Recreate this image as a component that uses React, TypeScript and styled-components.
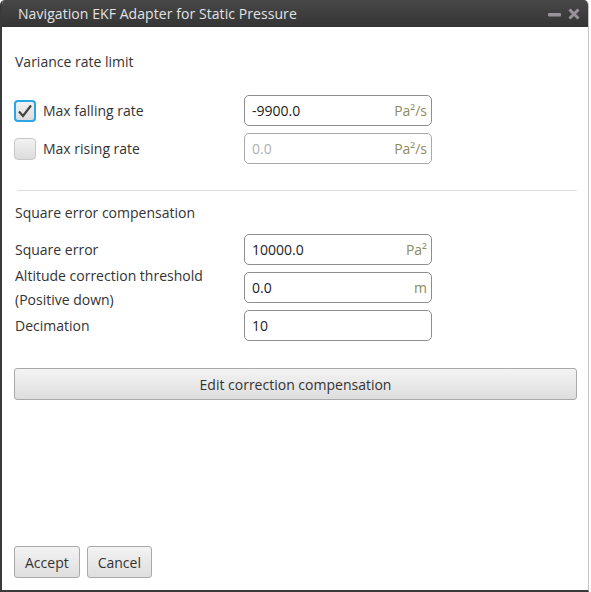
import React from "react";
import styled, { createGlobalStyle } from "styled-components";

const GlobalStyle = createGlobalStyle`
  html, body {
    margin: 0;
    padding: 0;
    background: #ffffff;
  }
  body {
    font-family: "Open Sans", "Noto Sans", "Liberation Sans", sans-serif;
    font-size: 14px;
    color: #333333;
  }
`;

const Window = styled.div`
  width: 589px;
  height: 592px;
  box-sizing: border-box;
  display: flex;
  flex-direction: column;
  background: #ffffff;
  border-left: 2px solid #3a3a3a;
  border-right: 1px solid #c4c4c4;
  border-bottom: 2px solid #3a3a3a;
  border-radius: 5px 5px 0 0;
  overflow: hidden;
`;

const TitleBar = styled.div`
  height: 27px;
  flex: none;
  display: flex;
  align-items: center;
  padding: 0 8px 0 16px;
  background: linear-gradient(#474747, #353535);
  color: #e2e2e2;
  font-size: 14px;
`;

const Title = styled.span`
  flex: 1;
  letter-spacing: 0.07px;
`;

const TitleButtons = styled.div`
  display: flex;
  align-items: center;
  gap: 7px;
`;

const Body = styled.div`
  flex: 1;
  display: flex;
  flex-direction: column;
  padding: 25px 11px 12px 13px;
`;

const SectionTitle = styled.div`
  line-height: 20px;
`;

const FormGrid = styled.div<{ $top: number }>`
  display: grid;
  grid-template-columns: 229px 188px;
  row-gap: 7px;
  margin-top: ${(p) => p.$top}px;
  align-items: center;
`;

const CheckLabel = styled.label`
  display: flex;
  align-items: center;
  gap: 7px;
  margin-left: -1px;
`;

const Box = styled.span<{ $checked?: boolean }>`
  width: 22px;
  height: 22px;
  box-sizing: border-box;
  border-radius: 4px;
  border: ${(p) => (p.$checked ? "2px solid #2aa6e6" : "1px solid #c8c8c8")};
  background: linear-gradient(#f2f2f2, #dcdcdc);
  display: flex;
  align-items: center;
  justify-content: center;
`;

const Label = styled.div`
  line-height: 24px;
`;

const TwoLineLabel = styled.div`
  line-height: 24px;
  margin-top: -8px;
  margin-bottom: -9px;
`;

const Field = styled.div<{ $disabled?: boolean }>`
  height: 31px;
  box-sizing: border-box;
  border: 1px solid ${(p) => (p.$disabled ? "#a8a8a8" : "#8e8e8e")};
  border-radius: 5px;
  background: #fff;
  display: flex;
  align-items: center;
  padding: 0 4px 0 7px;
  color: ${(p) => (p.$disabled ? "#b0b0b0" : "#222")};
`;

const Value = styled.span`
  flex: 1;
`;

const Unit = styled.span`
  color: #8d8a5c;
`;

const Divider = styled.div`
  height: 1px;
  background: #dedede;
  margin: 26px 0 12px 2px;
`;

const Button = styled.button`
  height: 32px;
  box-sizing: border-box;
  border: 1px solid #a9a9a9;
  border-radius: 3px;
  background: linear-gradient(#f3f3f3, #dedede);
  font-family: inherit;
  font-size: 14px;
  color: #333;
  padding: 0 10px;
`;

const WideButton = styled(Button)`
  margin-top: 27px;
  margin-left: -1px;
  width: 563px;
`;

const Footer = styled.div`
  margin-top: auto;
  display: flex;
  gap: 7px;
  margin-left: -1px;
`;

function Check({ checked }: { checked?: boolean }) {
  return (
    <Box $checked={checked}>
      {checked && (
        <svg width="16" height="14" viewBox="0 0 16 14">
          <path d="M2 7.5 L6 12 L14 1.5" fill="none" stroke="#444" strokeWidth="2.2" />
        </svg>
      )}
    </Box>
  );
}

function Minimize() {
  return (
    <svg width="13" height="12" viewBox="0 0 13 12">
      <rect x="0" y="5" width="13" height="3.5" rx="1" fill="#9a929a" />
    </svg>
  );
}

function Close() {
  return (
    <svg width="12" height="12" viewBox="0 0 12 12">
      <path d="M1.5 1.5 L10.5 10.5 M10.5 1.5 L1.5 10.5" stroke="#9a929a" strokeWidth="3" />
    </svg>
  );
}

export default function App() {
  return (
    <>
      <GlobalStyle />
      <Window>
        <TitleBar>
          <Title>Navigation EKF Adapter for Static Pressure</Title>
          <TitleButtons>
            <Minimize />
            <Close />
          </TitleButtons>
        </TitleBar>
        <Body>
          <SectionTitle>Variance rate limit</SectionTitle>
          <FormGrid $top={23}>
            <CheckLabel>
              <Check checked />
              Max falling rate
            </CheckLabel>
            <Field>
              <Value>-9900.0</Value>
              <Unit>Pa²/s</Unit>
            </Field>
            <CheckLabel>
              <Check />
              Max rising rate
            </CheckLabel>
            <Field $disabled>
              <Value>0.0</Value>
              <Unit>Pa²/s</Unit>
            </Field>
          </FormGrid>
          <Divider />
          <SectionTitle>Square error compensation</SectionTitle>
          <FormGrid $top={11}>
            <Label>Square error</Label>
            <Field>
              <Value>10000.0</Value>
              <Unit>Pa²</Unit>
            </Field>
            <TwoLineLabel>
              Altitude correction threshold
              <br />
              (Positive down)
            </TwoLineLabel>
            <Field>
              <Value>0.0</Value>
              <Unit>m</Unit>
            </Field>
            <Label>Decimation</Label>
            <Field>
              <Value>10</Value>
            </Field>
          </FormGrid>
          <WideButton>Edit correction compensation</WideButton>
          <Footer>
            <Button>Accept</Button>
            <Button>Cancel</Button>
          </Footer>
        </Body>
      </Window>
    </>
  );
}
